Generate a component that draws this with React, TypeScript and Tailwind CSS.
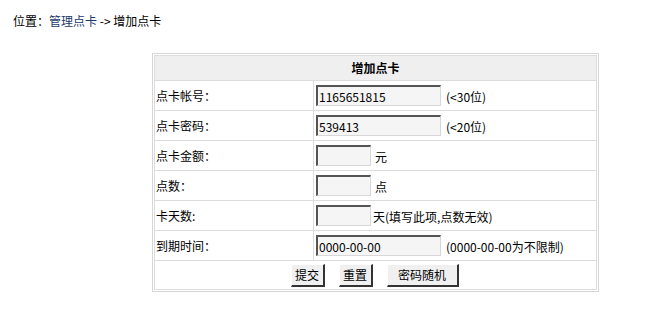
const font = { fontFamily: '"Noto Sans CJK SC", "Liberation Sans", sans-serif' };

function Field({ value, wide }: { value?: string; wide?: boolean }) {
  return (
    <input
      readOnly
      value={value ?? ''}
      className={`h-[21px] ${wide ? 'w-[125px]' : 'w-[55px]'} bg-[#f5f5f5] border border-t-[#555] border-l-[#555] border-b-[#d8d8d8] border-r-[#d8d8d8] border-t-2 border-l-2 px-[1px] text-[12px] text-black outline-none`}
      style={font}
    />
  );
}

function Btn({ label, wide }: { label: string; wide?: boolean }) {
  return (
    <button
      className={`h-[23px] ${wide ? 'w-[72px]' : 'w-[34px]'} bg-[#f0f0f0] border border-t-[#fff] border-l-[#fff] border-b-[#333] border-r-[#333] border-b-2 border-r-2 text-[12px] text-black leading-none`}
      style={font}
    >
      {label}
    </button>
  );
}

export default function App() {
  const rows = [
    { label: '点卡帐号：', value: '1165651815', wide: true, note: '(<30位)', gap: 'ml-[5px]' },
    { label: '点卡密码：', value: '539413', wide: true, note: '(<20位)', gap: 'ml-[5px]' },
    { label: '点卡金额：', value: '', wide: false, note: '元', gap: 'ml-[4px]' },
    { label: '点数：', value: '', wide: false, note: '点', gap: 'ml-[4px]' },
    { label: '卡天数:', value: '', wide: false, note: '天(填写此项,点数无效)', gap: 'ml-[2px]' },
    { label: '到期时间：', value: '0000-00-00', wide: true, note: '(0000-00-00为不限制)', gap: 'ml-[5px]' },
  ];

  return (
    <div className="w-[658px] h-[328px] bg-white text-[12px] text-black" style={font}>
      <div className="pt-[12px] pl-[13px] h-[53px]">
        位置：<span className="text-[#1a3a6a]">管理点卡</span> -&gt; 增加点卡
      </div>
      <div className="ml-[152px] w-[447px] border border-[#d6d6d6] p-[1px]">
        <table className="w-full border-collapse">
          <tbody>
            <tr className="h-[25px] bg-[#efefef]">
              <td colSpan={2} className="border border-[#dcdcdc] text-center font-bold">
                增加点卡
              </td>
            </tr>
            {rows.map((r) => (
              <tr key={r.label} className="h-[30px]">
                <td className="w-[159px] border border-[#dcdcdc] pl-[1px]">{r.label}</td>
                <td className="border border-[#dcdcdc] pl-[2px]">
                  <div className="flex items-center">
                    <Field value={r.value} wide={r.wide} />
                    <span className={`${r.gap} mt-[3px]`}>{r.note}</span>
                  </div>
                </td>
              </tr>
            ))}
            <tr className="h-[29px]">
              <td colSpan={2} className="border border-[#dcdcdc]">
                <div className="flex justify-center gap-[14px] pr-[2px]">
                  <Btn label="提交" />
                  <Btn label="重置" />
                  <Btn label="密码随机" wide />
                </div>
              </td>
            </tr>
          </tbody>
        </table>
      </div>
    </div>
  );
}
